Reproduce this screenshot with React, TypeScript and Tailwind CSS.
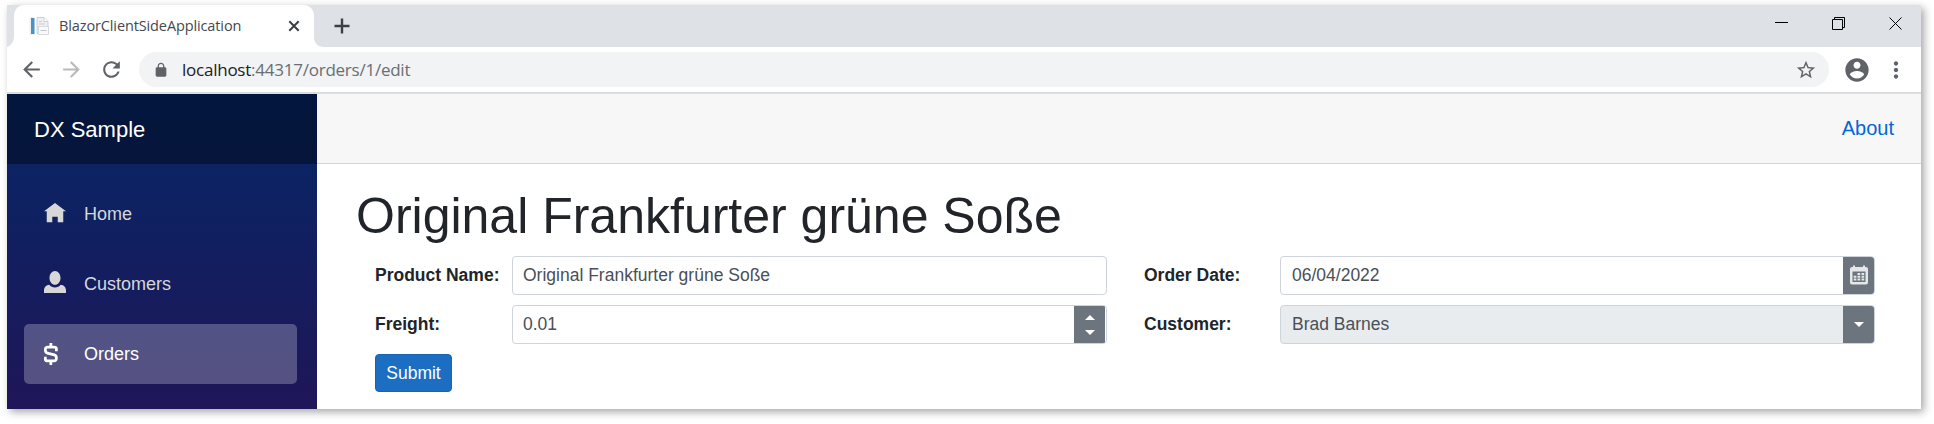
import type { ReactNode } from "react";

type IconProps = { d: string; size: string; box?: string; color?: string };

function Icon({ d, size, box = "0 0 24 24", color = "text-[#5f6368]" }: IconProps) {
  return (
    <svg viewBox={box} className={`block shrink-0 ${size} ${color}`} fill="currentColor">
      <path d={d} />
    </svg>
  );
}

const paths = {
  back: "M20 11H7.83l5.59-5.59L12 4l-8 8 8 8 1.41-1.41L7.83 13H20v-2z",
  forward: "M12 4l-1.41 1.41L16.17 11H4v2h12.17l-5.58 5.59L12 20l8-8z",
  refresh:
    "M17.65 6.35C16.2 4.9 14.21 4 12 4c-4.42 0-7.99 3.58-7.99 8s3.57 8 7.99 8c3.73 0 6.84-2.55 7.73-6h-2.08c-.82 2.33-3.04 4-5.65 4-3.31 0-6-2.69-6-6s2.69-6 6-6c1.66 0 3.14.69 4.22 1.78L13 11h7V4l-2.35 2.35z",
  lock: "M18 8h-1V6c0-2.76-2.24-5-5-5S7 3.24 7 6v2H6c-1.1 0-2 .9-2 2v10c0 1.1.9 2 2 2h12c1.1 0 2-.9 2-2V10c0-1.1-.9-2-2-2zM15.1 8H8.9V6c0-1.71 1.39-3.1 3.1-3.1s3.1 1.39 3.1 3.1v2z",
  star: "M22 9.24l-7.19-.62L12 2 9.19 8.63 2 9.24l5.46 4.73L5.82 21 12 17.27 18.18 21l-1.63-7.03L22 9.24zM12 15.4l-3.76 2.27 1-4.28-3.32-2.88 4.38-.38L12 6.1l1.71 4.04 4.38.38-3.32 2.88 1 4.28L12 15.4z",
  account:
    "M12 2C6.48 2 2 6.48 2 12s4.48 10 10 10 10-4.48 10-10S17.52 2 12 2zm0 3c1.66 0 3 1.34 3 3s-1.34 3-3 3-3-1.34-3-3 1.34-3 3-3zm0 14.2c-2.5 0-4.71-1.28-6-3.22.03-1.99 4-3.08 6-3.08 1.99 0 5.97 1.09 6 3.08-1.29 1.94-3.5 3.22-6 3.22z",
  more: "M12 8c1.1 0 2-.9 2-2s-.9-2-2-2-2 .9-2 2 .9 2 2 2zm0 2c-1.1 0-2 .9-2 2s.9 2 2 2 2-.9 2-2-.9-2-2-2zm0 6c-1.1 0-2 .9-2 2s.9 2 2 2 2-.9 2-2-.9-2-2-2z",
  home: "M4 0l-4 3h1v4h2v-2h2v2h2v-4.03l1 .03-4-3z",
  person:
    "M4 0c-1.1 0-2 1.12-2 2.5s.9 2.5 2 2.5 2-1.12 2-2.5-.9-2.5-2-2.5zm-2.09 5c-1.06.05-1.91.92-1.91 2v1h8v-1c0-1.08-.84-1.95-1.91-2-.54.61-1.28 1-2.09 1-.81 0-1.55-.39-2.09-1z",
  dollar:
    "M2 0v1h-.75c-.68 0-1.25.57-1.25 1.25v.5c0 .68.44 1.24 1.09 1.41l2.56.66c.14.04.34.29.34.44v.5c0 .14-.11.25-.25.25h-2.5c-.12 0-.21-.04-.25-.06v-.94h-1v1c0 .34.2.63.44.78.23.16.52.22.81.22h.75v1h1v-1h.75c.69 0 1.25-.56 1.25-1.25v-.5c0-.68-.44-1.24-1.09-1.41l-2.56-.66c-.14-.04-.34-.29-.34-.44v-.5c0-.14.11-.25.25-.25h2.5c.11 0 .21.04.25.06v.94h1v-1c0-.34-.2-.63-.44-.78-.23-.16-.52-.22-.81-.22h-.75v-1h-1z",
};

function Favicon() {
  return (
    <svg viewBox="0 0 20 20" className="block h-5 w-5 shrink-0">
      <rect x="0.5" y="1" width="5" height="18" fill="#edf1f4" />
      <rect x="2" y="2" width="3.5" height="16" fill="#4a93c6" />
      <path d="M8 1.500h7l4 4v12H8z" fill="#eef0f2" stroke="#c3c7ca" strokeWidth="0.8" />
      <path d="M15 1.500v4h4" fill="#fff" stroke="#c3c7ca" strokeWidth="0.8" />
      <path d="M10 5.500h3M10 8h6" stroke="#c9cdd0" />
      <rect x="9.5" y="10.5" width="10" height="8" fill="#f8f9fa" stroke="#d0d4d8" strokeWidth="0.8" />
      <path d="M11.500 14.500h6" stroke="#bfc5cb" />
    </svg>
  );
}

function TabStrip() {
  return (
    <div className="flex h-[42px] bg-[#dee1e6]">
      <svg viewBox="0 0 7 42" className="h-[42px] w-[7px] shrink-0" fill="#fff">
        <path d="M7 31v11H0c4.500-1.500 7-5.500 7-11z" />
      </svg>
      <div className="flex h-full w-[300px] items-center rounded-t-[10px] bg-white pl-[15px] pr-[13px]">
        <Favicon />
        <span className="ml-2.5 grow whitespace-nowrap font-['Open_Sans',sans-serif] text-[14.5px] tracking-[-0.12px] text-[#45494d]">
          BlazorClientSideApplication
        </span>
        <svg viewBox="0 0 14 14" className="h-3.5 w-3.5" fill="none" stroke="#3c4043" strokeWidth="2">
          <path d="M2.300 2.300l9.400 9.400M11.700 2.300l-9.400 9.400" />
        </svg>
      </div>
      <svg viewBox="0 0 10 42" className="h-[42px] w-[10px] shrink-0" fill="#fff">
        <path d="M0 32v10h10C4 42 0 38 0 32z" />
      </svg>
      <div className="flex grow items-center pl-[9.5px]">
        <svg viewBox="0 0 16 16" className="h-4 w-4" fill="none" stroke="#3c4043" strokeWidth="2.4">
          <path d="M8 .5v15M.5 8h15" />
        </svg>
      </div>
      <div className="flex items-start gap-[43px] pr-[18px] pt-[11px]">
        <svg viewBox="0 0 14 14" className="h-3.5 w-3.5" stroke="#000">
          <path d="M0 6.500h13" />
        </svg>
        <svg viewBox="0 0 14 14" className="h-3.5 w-3.5" fill="none" stroke="#000">
          <path d="M.5 3.500h10v10H.5zM2.500 3.500v-2h10v10h-2" />
        </svg>
        <svg viewBox="0 0 14 14" className="h-3.5 w-3.5" fill="none" stroke="#000">
          <path d="M.5 1.500l12 12M12.500 1.500l-12 12" />
        </svg>
      </div>
    </div>
  );
}

function Toolbar() {
  return (
    <div className="flex h-[47px] items-center border-b-2 border-[#dadce0] bg-white pl-3">
      <div className="flex w-[120px] gap-[15px]">
        <Icon d={paths.back} size="h-[25px] w-[25px]" />
        <Icon d={paths.forward} size="h-[25px] w-[25px]" color="text-[#bababc]" />
        <Icon d={paths.refresh} size="h-[25px] w-[25px]" />
      </div>
      <div className="flex h-[35px] w-[1690px] items-center rounded-full bg-[#f1f3f4] pl-[14px] pr-3">
        <Icon d={paths.lock} size="h-4 w-4" />
        <span className="ml-[13px] grow whitespace-nowrap font-['Open_Sans',sans-serif] text-[17px] tracking-[-0.24px] text-[#6a6e73]">
          <span className="text-[#202124]">localhost</span>:44317/orders/1/edit
        </span>
        <Icon d={paths.star} size="h-[22px] w-[22px]" />
      </div>
      <div className="ml-[14px] flex items-center gap-3">
        <Icon d={paths.account} size="h-7 w-7" />
        <Icon d={paths.more} size="h-[26px] w-[26px]" />
      </div>
    </div>
  );
}

function NavItem({ icon, label, active = false }: { icon: ReactNode; label: string; active?: boolean }) {
  return (
    <div
      className={`flex h-[60px] items-center rounded-[5px] pl-5 text-[18px] ${
        active ? "bg-white/25 text-white" : "text-[#d7d7d7]"
      }`}
    >
      <span className="w-10">{icon}</span>
      {label}
    </div>
  );
}

function Sidebar() {
  return (
    <aside className="flex w-[310px] shrink-0 flex-col bg-[linear-gradient(180deg,#052767_0%,#1f1658_100%)]">
      <div className="flex h-[70px] items-center bg-black/40 pl-[27px] text-[22px] text-white">DX Sample</div>
      <nav className="flex flex-col gap-2.5 pl-[17px] pr-5 pt-5">
        <NavItem label="Home" icon={<Icon d={paths.home} box="0 0 8 8" size="h-[22px] w-[22px]" color="text-[#d7d7d7]" />} />
        <NavItem
          label="Customers"
          icon={
            <span className="block pb-1">
              <Icon d={paths.person} box="0 0 8 8" size="h-[22px] w-[22px]" color="text-[#d7d7d7]" />
            </span>
          }
        />
        <NavItem active label="Orders" icon={<Icon d={paths.dollar} box="0 0 8 8" size="h-[22px] w-[22px]" color="text-white" />} />
      </nav>
    </aside>
  );
}

function Caret({ up = false }: { up?: boolean }) {
  return (
    <svg viewBox="0 0 10 5" className="block h-[5px] w-2.5" fill="#fff">
      <path d={up ? "M0 5l5-5 5 5z" : "M0 0l5 5 5-5z"} />
    </svg>
  );
}

function Calendar() {
  return (
    <svg viewBox="0 0 18 20" className="mb-0.5 block h-5 w-[18px]">
      <path
        d="M2 2h1V.5h2V2h8V.5h2V2h1a2 2 0 0 1 2 2v13.500a2 2 0 0 1-2 2H2a2 2 0 0 1-2-2V4a2 2 0 0 1 2-2z"
        fill="#e6e7e8"
      />
      <rect x="2.5" y="6.5" width="13" height="10.5" fill="#6c757d" />
      <path
        d="M7.500 7.900h2.700v2H7.500zM11.500 7.900h2.700v2h-2.700zM3.700 10.700h2.700v2H3.700zM7.500 10.700h2.700v2H7.500zM11.500 10.700h2.700v2h-2.700zM3.700 13.500h2.700v2H3.700zM7.500 13.500h2.700v2H7.500zM11.500 13.500h2.700v2h-2.700z"
        fill="#e6e7e8"
      />
    </svg>
  );
}

type FieldProps = {
  label: string;
  value: string;
  button?: ReactNode;
  muted?: boolean;
  inset?: boolean;
  indent?: boolean;
};

function Field({ label, value, button, muted = false, inset = false, indent = false }: FieldProps) {
  return (
    <div className="flex h-[39px] items-center">
      <span
        className={`w-[137px] shrink-0 whitespace-nowrap text-[17.5px] font-bold text-[#212529] ${indent ? "pl-px" : ""}`}
      >
        {label}
      </span>
      <div
        className={`flex h-full grow items-center overflow-hidden rounded-[4px] border border-[#ced4da] pl-2.5 text-[17.5px] text-[#495057] ${
          muted ? "bg-[#e9ecef]" : "bg-white"
        } ${inset ? "pr-px" : ""}`}
      >
        <span className={`grow whitespace-nowrap ${indent ? "pl-px" : ""}`}>{value}</span>
        {button && (
          <span className="flex h-full w-[31px] flex-col items-center justify-center gap-2.5 bg-[#6c757d]">{button}</span>
        )}
      </div>
    </div>
  );
}

function Main() {
  return (
    <main className="flex min-w-0 grow flex-col bg-white">
      <div className="flex h-[70px] items-center justify-end border-b border-[#d6d5d5] bg-[#f7f7f7] pb-0.5 pr-[27px] text-[20px] text-[#0366d6]">
        About
      </div>
      <div className="pl-[39px] pr-[46px] pt-[22px]">
        <h1 className="h-[60px] whitespace-nowrap text-[50px] leading-[60px] text-[#212529]">
          Original Frankfurter grüne Soße
        </h1>
        <div className="mt-2.5 grid grid-cols-[732px_732px] gap-x-[36px] gap-y-2.5 pl-[19px]">
          <Field label="Product Name:" value="Original Frankfurter grüne Soße" />
          <Field indent label="Order Date:" value="06/04/2022" button={<Calendar />} />
          <Field
            label="Freight:"
            value="0.01"
            inset
            button={
              <>
                <Caret up />
                <Caret />
              </>
            }
          />
          <Field indent label="Customer:" value="Brad Barnes" muted button={<Caret />} />
          <button className="h-[38px] w-[77px] rounded-[4px] border border-[#1862ae] bg-[#1b6ec2] text-[17.5px] text-white">
            Submit
          </button>
        </div>
      </div>
    </main>
  );
}

export default function App() {
  return (
    <div className="h-[424px] w-[1934px] overflow-hidden bg-white pl-[7px] pt-[5px] font-['Liberation_Sans',Arial,sans-serif]">
      <div className="flex h-[404px] w-[1914px] flex-col shadow-[3px_3px_8px_rgba(0,0,0,0.35)]">
        <TabStrip />
        <Toolbar />
        <div className="flex min-h-0 grow">
          <Sidebar />
          <Main />
        </div>
      </div>
    </div>
  );
}
